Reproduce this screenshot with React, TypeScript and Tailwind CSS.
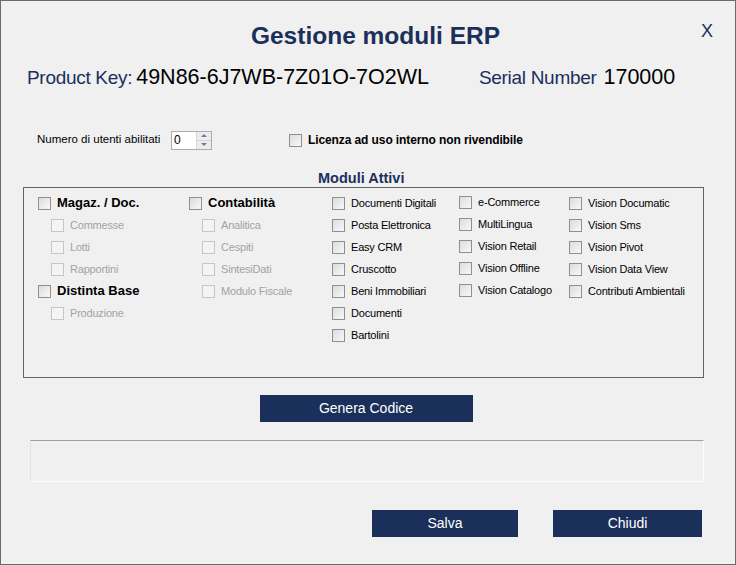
import React from 'react';

const navy = 'text-[#1b2f5b]';

function Box({ disabled }: { disabled?: boolean }) {
  return (
    <span
      className={`inline-block w-[13px] h-[13px] shrink-0 border ${
        disabled ? 'border-[#c6c6c6] bg-[#f4f4f4]' : 'border-[#8e8f8f] bg-gradient-to-br from-[#dcdcdc] to-[#f8f8f8]'
      }`}
    />
  );
}

function Check({ label, bold, disabled, sub }: { label: string; bold?: boolean; disabled?: boolean; sub?: boolean }) {
  return (
    <div className={`flex items-center h-[22px] ${sub ? 'pl-[13px]' : ''}`}>
      <Box disabled={disabled} />
      <span
        className={`ml-[6px] whitespace-nowrap ${bold ? 'font-bold text-[13px]' : 'text-[11px] tracking-[-0.2px]'} ${
          disabled ? 'text-[#a3a3a3]' : 'text-black'
        }`}
      >
        {label}
      </span>
    </div>
  );
}

export default function App() {
  const col3 = ['Documenti Digitali', 'Posta Elettronica', 'Easy CRM', 'Cruscotto', 'Beni Immobiliari', 'Documenti', 'Bartolini'];
  const col4 = ['e-Commerce', 'MultiLingua', 'Vision Retail', 'Vision Offline', 'Vision Catalogo'];
  const col5 = ['Vision Documatic', 'Vision Sms', 'Vision Pivot', 'Vision Data View', 'Contributi Ambientali'];

  return (
    <div className="relative w-[736px] h-[565px] bg-[#f0f0f0] border border-[#6b6b6b] font-['Liberation_Sans',Arial,sans-serif]">
      {/* titolo */}
      <div className={`pt-[19px] pl-[15px] text-center text-[24.5px] font-bold leading-[32px] ${navy}`}>Gestione moduli ERP</div>
      <button className={`absolute right-[22px] top-[20px] text-[18px] leading-[20px] ${navy}`}>X</button>

      <div className="flex items-baseline mt-[9px] pl-[26px] h-[30px]">
        <span className={`text-[19px] tracking-[-0.3px] ${navy}`}>Product Key:</span>
        <span className="ml-[4px] text-[21.5px] text-black">49N86-6J7WB-7Z01O-7O2WL</span>
        <span className={`ml-[50px] text-[19px] tracking-[-0.3px] ${navy}`}>Serial Number</span>
        <span className="ml-[7px] text-[21.5px] text-black">170000</span>
      </div>

      {/* utenti + licenza */}
      <div className="flex items-center mt-[39px] pl-[36px] h-[20px]">
        <span className="text-[11.5px] text-black w-[134px] -mt-[1px]">Numero di utenti abilitati</span>
        <div className="flex w-[41px] h-[19px] border border-[#acacac] bg-white">
          <span className="flex-1 text-[12px] leading-[17px] pl-[2px] text-black">0</span>
          <div className="flex flex-col w-[15px] border-l border-[#d6d6d6]">
            <div className="flex-1 flex items-center justify-center bg-[#ececec] border-b border-[#d6d6d6]">
              <span className="w-0 h-0 border-l-[3px] border-r-[3px] border-b-[3px] border-l-transparent border-r-transparent border-b-[#6a7fa8]" />
            </div>
            <div className="flex-1 flex items-center justify-center bg-[#ececec]">
              <span className="w-0 h-0 border-l-[3px] border-r-[3px] border-t-[3px] border-l-transparent border-r-transparent border-t-[#6a7fa8]" />
            </div>
          </div>
        </div>
        <div className="flex items-center ml-[77px]">
          <Box />
          <span className="ml-[6px] text-[12px] font-bold tracking-[-0.1px] text-black">Licenza ad uso interno non rivendibile</span>
        </div>
      </div>

      {/* moduli attivi */}
      <div className={`mt-[20px] pl-[317px] text-[14.5px] font-bold leading-[16px] ${navy}`}>Moduli Attivi</div>
      <div className="ml-[22px] mt-[1px] w-[681px] h-[191px] border border-[#646464] flex pl-[14px] pt-[4px]">
        <div className="w-[151px]">
          <Check label="Magaz. / Doc." bold />
          <Check label="Commesse" sub disabled />
          <Check label="Lotti" sub disabled />
          <Check label="Rapportini" sub disabled />
          <Check label="Distinta Base" bold />
          <Check label="Produzione" sub disabled />
        </div>
        <div className="w-[143px]">
          <Check label="Contabilità" bold />
          <Check label="Analitica" sub disabled />
          <Check label="Cespiti" sub disabled />
          <Check label="SintesiDati" sub disabled />
          <Check label="Modulo Fiscale" sub disabled />
        </div>
        <div className="w-[127px]">
          {col3.map(l => (
            <Check key={l} label={l} />
          ))}
        </div>
        <div className="w-[110px] -mt-[1px]">
          {col4.map(l => (
            <Check key={l} label={l} />
          ))}
        </div>
        <div>
          {col5.map(l => (
            <Check key={l} label={l} />
          ))}
        </div>
      </div>

      {/* genera */}
      <div className="flex justify-center mt-[17px] pr-[4px]">
        <button className="w-[213px] h-[27px] bg-[#1b2f5b] text-white text-[14px]">Genera Codice</button>
      </div>

      <div className="ml-[29px] mt-[18px] w-[674px] h-[42px] border border-t-[#a0a0a0] border-l-[#e3e3e3] border-r-[#fcfcfc] border-b-[#fcfcfc] bg-[#f0f0f0]" />

      <div className="flex justify-end gap-[35px] mt-[28px] pr-[33px]">
        <button className="w-[146px] h-[27px] bg-[#1b2f5b] text-white text-[14px]">Salva</button>
        <button className="w-[149px] h-[27px] bg-[#1b2f5b] text-white text-[14px]">Chiudi</button>
      </div>
    </div>
  );
}
